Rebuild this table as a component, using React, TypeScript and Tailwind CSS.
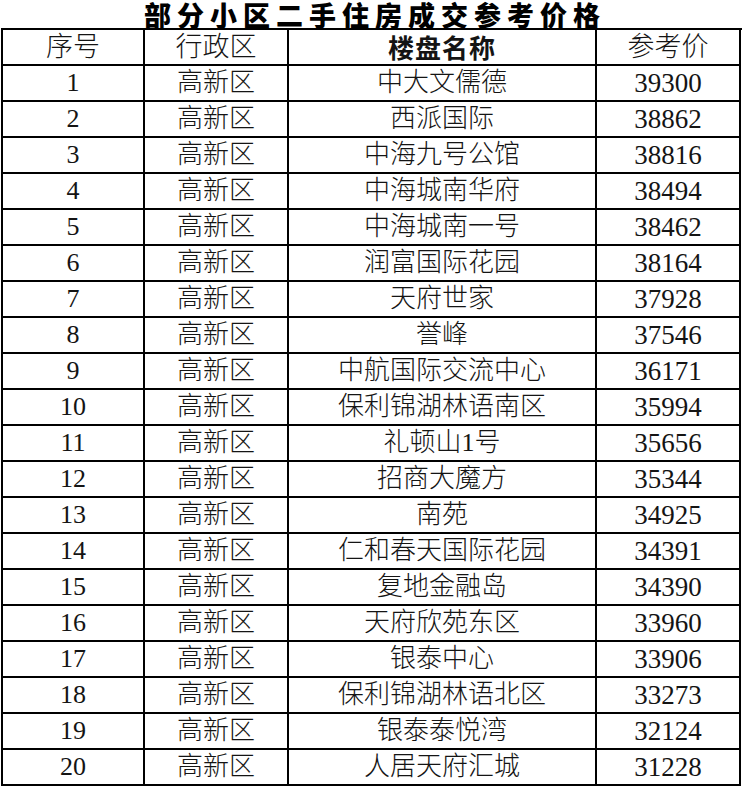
const rows: [number, string, string, number][] = [
  [1, "高新区", "中大文儒德", 39300],
  [2, "高新区", "西派国际", 38862],
  [3, "高新区", "中海九号公馆", 38816],
  [4, "高新区", "中海城南华府", 38494],
  [5, "高新区", "中海城南一号", 38462],
  [6, "高新区", "润富国际花园", 38164],
  [7, "高新区", "天府世家", 37928],
  [8, "高新区", "誉峰", 37546],
  [9, "高新区", "中航国际交流中心", 36171],
  [10, "高新区", "保利锦湖林语南区", 35994],
  [11, "高新区", "礼顿山1号", 35656],
  [12, "高新区", "招商大魔方", 35344],
  [13, "高新区", "南苑", 34925],
  [14, "高新区", "仁和春天国际花园", 34391],
  [15, "高新区", "复地金融岛", 34390],
  [16, "高新区", "天府欣苑东区", 33960],
  [17, "高新区", "银泰中心", 33906],
  [18, "高新区", "保利锦湖林语北区", 33273],
  [19, "高新区", "银泰泰悦湾", 32124],
  [20, "高新区", "人居天府汇城", 31228],
];

const cell =
  "h-[36px] flex items-center justify-center border-r-2 border-b-2 border-black";

export default function App() {
  return (
    <div className="w-[743px] h-[786px] bg-white overflow-hidden text-[#141414] font-light font-['Liberation_Serif','Noto_Sans_CJK_SC',serif]">
      {/* Title */}
      <div className="h-[28px] flex items-center justify-center pl-[7px] pt-[1px]">
        <h1 className="block text-[27px] leading-[26px] font-black tracking-[6px] text-black font-['Noto_Sans_CJK_SC',sans-serif]">
          部分小区二手住房成交参考价格
        </h1>
      </div>

      {/* Table */}
      <div className="ml-[1px] w-[741px] border-l-2 border-t-2 border-black text-[26px] leading-none">
        <div className="grid grid-cols-[142px_144px_308px_144px]">
          <div className={`${cell} text-[27px]`}>序号</div>
          <div className={`${cell} text-[27px]`}>行政区</div>
          <div className={`${cell} font-bold font-['Noto_Sans_CJK_SC',sans-serif] tracking-[1px]`}>
            楼盘名称
          </div>
          <div className={`${cell} text-[27px]`}>参考价</div>
        </div>
        {rows.map(([no, area, name, price]) => (
          <div key={no} className="grid grid-cols-[142px_144px_308px_144px]">
            <div className={cell}>{no}</div>
            <div className={cell}>{area}</div>
            <div className={cell}>{name}</div>
            <div className={cell}>
              <span className="text-[27px]">{price}</span>
            </div>
          </div>
        ))}
      </div>
    </div>
  );
}
